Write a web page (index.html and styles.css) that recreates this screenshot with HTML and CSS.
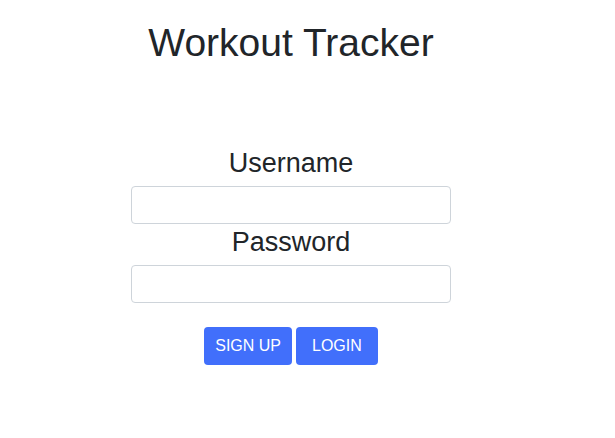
FILE: index.html
```html
<!DOCTYPE html>
<html>
<head>
<meta charset="utf-8">
<link rel="stylesheet" href="styles.css">
</head>
<body>
<div class="page">
  <h1 class="title">Workout Tracker</h1>
  <form class="form">
    <label class="label" for="u">Username</label>
    <input class="input" id="u" type="text">
    <label class="label" for="p">Password</label>
    <input class="input" id="p" type="password">
    <div class="actions">
      <button type="button" class="btn btn-signup">SIGN UP</button>
      <button type="button" class="btn btn-login">LOGIN</button>
    </div>
  </form>
</div>
</body>
</html>
```
FILE: styles.css
```css
* { box-sizing: border-box; }
body {
  margin: 0;
  font-family: "Liberation Sans", Arial, sans-serif;
  color: #212529;
  background: #fff;
}
.page {
  width: 582px;
  display: flex;
  flex-direction: column;
  align-items: center;
}
.title {
  margin: 19px 0 0;
  font-size: 39px;
  font-weight: 400;
  line-height: 48px;
}
.form {
  margin-top: 78px;
  display: flex;
  flex-direction: column;
  align-items: center;
}
.label {
  font-size: 27px;
  line-height: 37px;
  margin-bottom: 4px;
}
.input {
  width: 320px;
  height: 38px;
  border: 1px solid #ced4da;
  border-radius: 4px;
  margin: 0;
  padding: 6px 12px;
  font-size: 16px;
}
.actions {
  margin-top: 24px;
  display: flex;
  gap: 4px;
}
.btn {
  height: 38px;
  border: 0;
  border-radius: 4px;
  background: #416ffb;
  color: #fff;
  font-family: "Liberation Sans", Arial, sans-serif;
  font-size: 16px;
  padding: 0 11px;
}
.btn-login { padding: 0 16px; }
```
